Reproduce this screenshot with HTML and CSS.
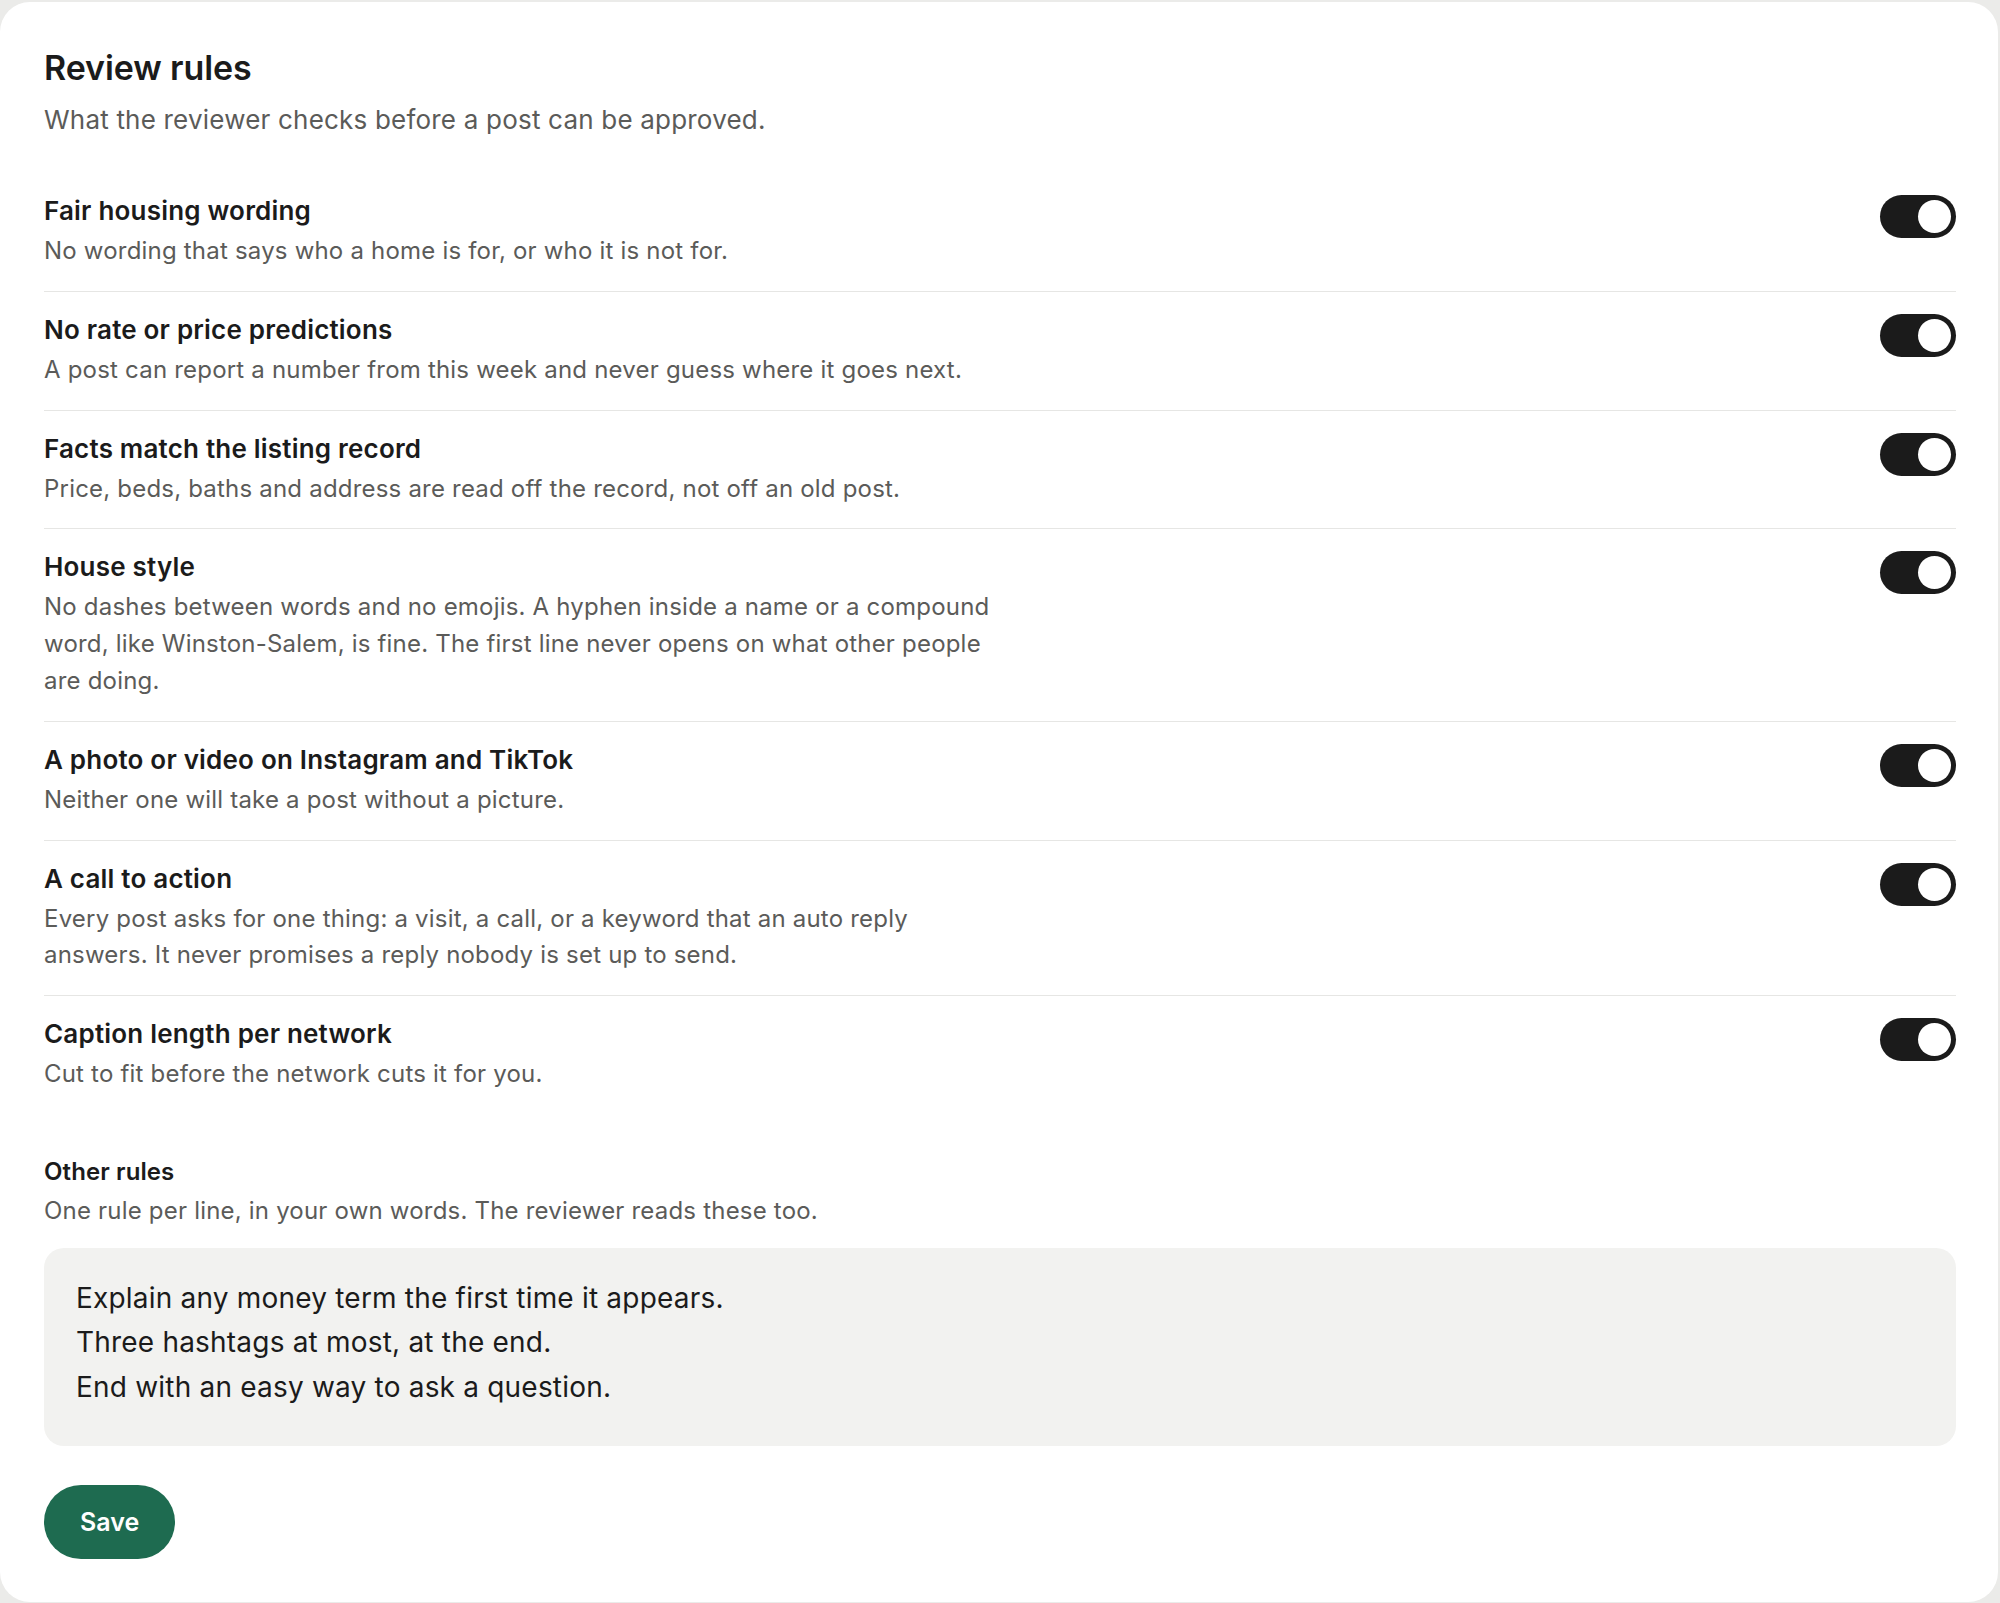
FILE: index.html
```html
<!DOCTYPE html>
<html lang="en">
<head>
  <meta charset="UTF-8">
  <meta name="viewport" content="width=device-width, initial-scale=1.0">
  <title>Review rules</title>
  <link rel="stylesheet" href="styles.css">
</head>
<body>
  <main class="card">
    <header class="card-head">
      <h1>Review rules</h1>
      <p>What the reviewer checks before a post can be approved.</p>
    </header>

    <ul class="rules">
      <li class="rule">
        <div class="rule-text">
          <h2>Fair housing wording</h2>
          <p>No wording that says who a home is for, or who it is not for.</p>
        </div>
        <span class="switch on"></span>
      </li>
      <li class="rule">
        <div class="rule-text">
          <h2>No rate or price predictions</h2>
          <p>A post can report a number from this week and never guess where it goes next.</p>
        </div>
        <span class="switch on"></span>
      </li>
      <li class="rule">
        <div class="rule-text">
          <h2>Facts match the listing record</h2>
          <p>Price, beds, baths and address are read off the record, not off an old post.</p>
        </div>
        <span class="switch on"></span>
      </li>
      <li class="rule">
        <div class="rule-text">
          <h2>House style</h2>
          <p>No dashes between words and no emojis. A hyphen inside a name or a compound word, like Winston-Salem, is fine. The first line never opens on what other people are doing.</p>
        </div>
        <span class="switch on"></span>
      </li>
      <li class="rule">
        <div class="rule-text">
          <h2>A photo or video on Instagram and TikTok</h2>
          <p>Neither one will take a post without a picture.</p>
        </div>
        <span class="switch on"></span>
      </li>
      <li class="rule">
        <div class="rule-text">
          <h2>A call to action</h2>
          <p>Every post asks for one thing: a visit, a call, or a keyword that an auto reply answers. It never promises a reply nobody is set up to send.</p>
        </div>
        <span class="switch on"></span>
      </li>
      <li class="rule">
        <div class="rule-text">
          <h2>Caption length per network</h2>
          <p>Cut to fit before the network cuts it for you.</p>
        </div>
        <span class="switch on"></span>
      </li>
    </ul>

    <section class="other">
      <h3>Other rules</h3>
      <p>One rule per line, in your own words. The reviewer reads these too.</p>
      <div class="textarea">
        <div>Explain any money term the first time it appears.</div>
        <div>Three hashtags at most, at the end.</div>
        <div>End with an easy way to ask a question.</div>
      </div>
    </section>

    <button class="save">Save</button>
  </main>
</body>
</html>
```

FILE: styles.css
```css
/* Basic reset */
* { margin: 0; padding: 0; box-sizing: border-box; }
html, body { height: 100%; }
body {
  background: #ebebe9;
  font-family: "Inter", "Noto Sans", sans-serif;
  color: #1b1b1b;
  padding: 2px 2px 3px 0;
}

.card {
  background: #fff;
  border-radius: 30px;
  padding: 46px 42px 43px 44px;
  min-height: 100%;
}

/* Header */
.card-head h1 { font-size: 34px; line-height: 40px; font-weight: 600; letter-spacing: -0.1px; }
.card-head p { margin-top: 13px; font-size: 26px; line-height: 37px; letter-spacing: 0.2px; color: #5b5b59; }

/* Rule list */
.rules { list-style: none; margin-top: 35px; }
.rule {
  display: flex; align-items: flex-start; justify-content: space-between; gap: 40px;
  padding: 21px 0 21px; border-bottom: 1px solid #e6e6e4;
}
.rule:last-child { border-bottom: none; }
.rule-text { max-width: 960px; }
.rule-text h2 { font-size: 26px; line-height: 33px; font-weight: 600; letter-spacing: 0.2px; }
.rule-text p { margin-top: 6px; font-size: 24px; line-height: 36.8px; letter-spacing: 0.2px; color: #5b5b59; }

/* Toggle */
.switch {
  flex: none; position: relative; width: 76px; height: 43px; margin-top: 1px;
  border-radius: 22px; background: #1b1b1b;
}
.switch::after {
  content: ""; position: absolute; top: 5px; left: 5px;
  width: 33px; height: 33px; border-radius: 50%; background: #fff;
}
.switch.on::after { left: 38px; }

/* Other rules */
.other { margin-top: 42px; }
.other h3 { font-size: 24px; line-height: 31px; font-weight: 600; letter-spacing: 0.1px; }
.other p { margin-top: 6px; font-size: 24px; line-height: 36.8px; letter-spacing: 0.2px; color: #5b5b59; }
.textarea {
  margin-top: 18px; height: 198px; padding: 28px 32px;
  background: #f2f2f0; border-radius: 20px;
  font-size: 28px; line-height: 44.5px; letter-spacing: 0.2px; color: #1b1b1b;
}

/* Save button */
.save {
  margin-top: 39px; height: 74px; padding: 0 36px;
  border: none; border-radius: 37px; background: #1e6b50; color: #fff;
  font-family: inherit; font-size: 25px; font-weight: 600; cursor: pointer;
}
```
